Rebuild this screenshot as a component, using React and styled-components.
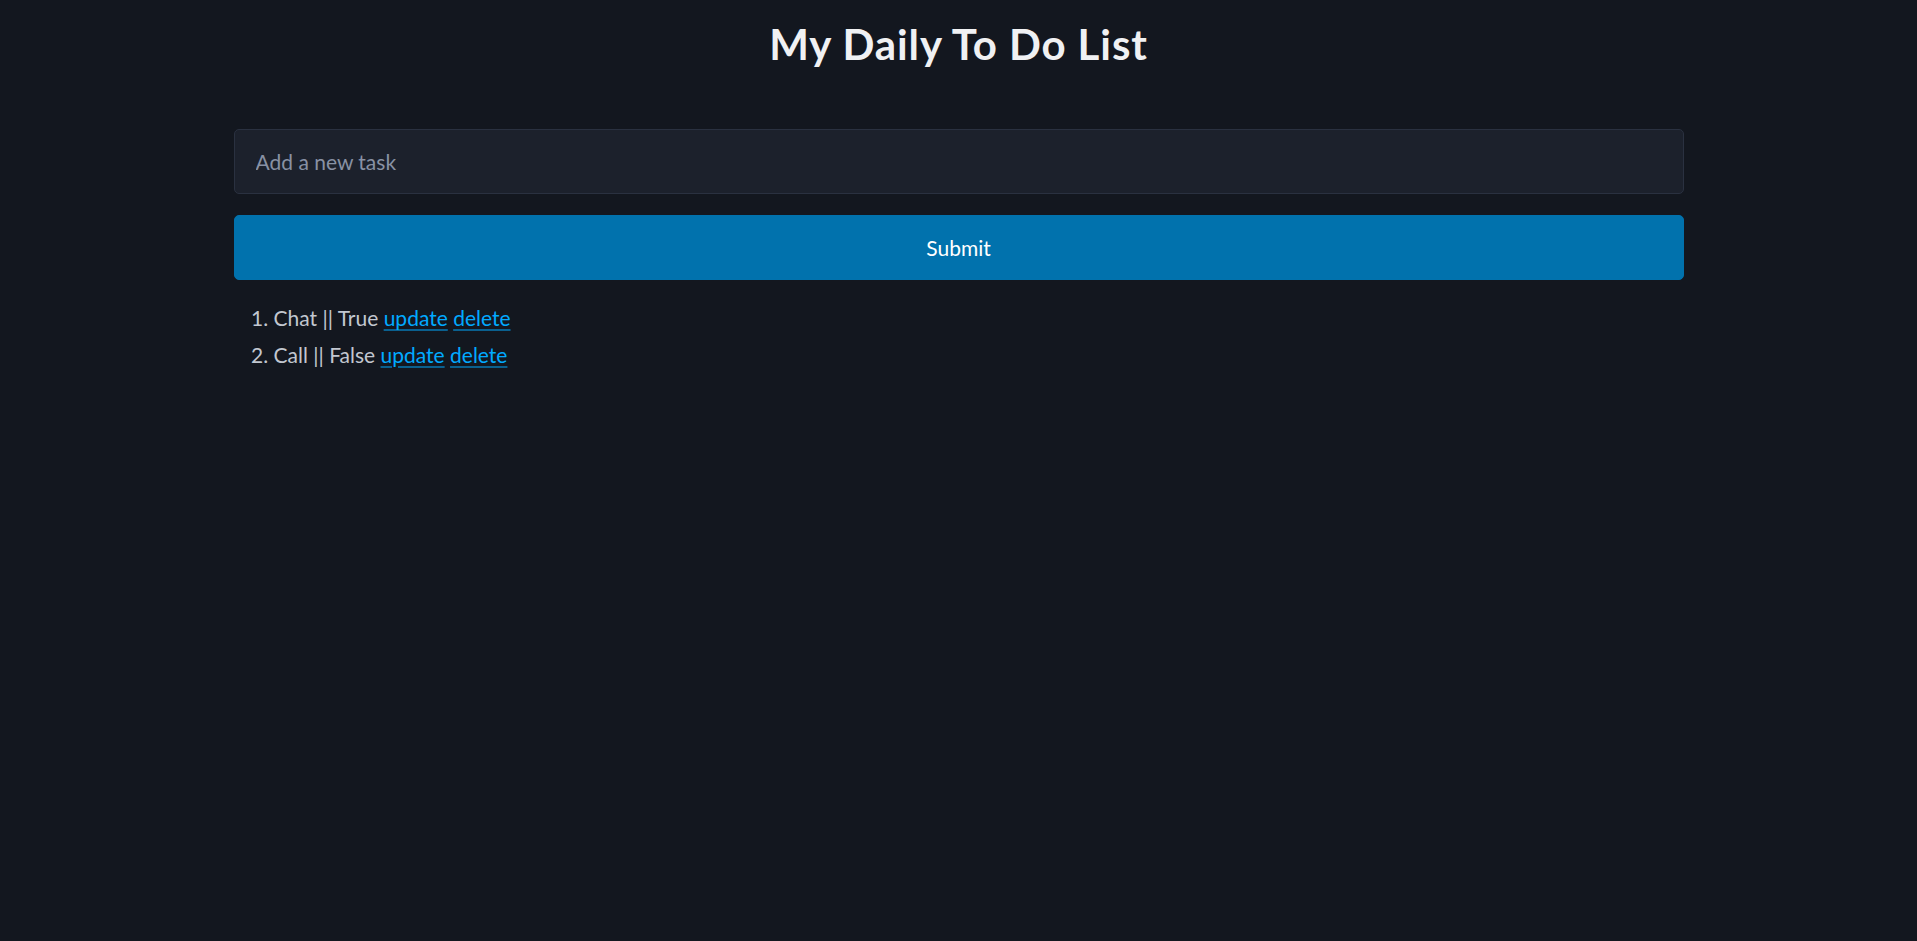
import React, { useState } from "react";
import styled, { createGlobalStyle } from "styled-components";

const GlobalStyle = createGlobalStyle`
  html, body {
    margin: 0;
    padding: 0;
    background: #13171f;
  }
  body {
    font-family: Lato, "Noto Sans", sans-serif;
    font-size: 21px;
    line-height: 1.5;
    color: #c2c7d0;
  }
  * { box-sizing: border-box; }
`;

const Main = styled.main`
  max-width: 1450px;
  margin: 0 auto;
  padding: 21px 0 21px;
`;

const Title = styled.h1`
  margin: 0 0 61px;
  text-align: center;
  font-size: 42px;
  line-height: 1.125;
  font-weight: 700;
  letter-spacing: 0.9px;
  color: #f0f1f3;
`;

const Form = styled.form`
  display: flex;
  flex-direction: column;
  gap: 21px;
  margin: 0 0 22px;
`;

const Input = styled.input`
  width: 100%;
  height: 65px;
  padding: 0 21px;
  font: inherit;
  color: #c2c7d0;
  background: #1c212c;
  border: 1px solid #2a3140;
  border-radius: 5px;
  outline: none;
  &::placeholder { color: #8891a4; }
`;

const Button = styled.button`
  width: 100%;
  height: 65px;
  font: inherit;
  color: #ffffff;
  background: #0172ad;
  border: 1px solid #0172ad;
  border-radius: 5px;
  cursor: pointer;
`;

const List = styled.ol`
  margin: 0;
  padding-left: 40px;
`;

const Item = styled.li`
  margin-bottom: 5px;
`;

const Link = styled.a`
  color: #01aaff;
  text-decoration: underline;
  text-decoration-color: rgba(1, 170, 255, 0.5);
  text-underline-offset: 3px;
  cursor: pointer;
`;

export default function App() {
  const [tasks] = useState([
    { name: "Chat", done: "True" },
    { name: "Call", done: "False" },
  ]);
  return (
    <>
      <GlobalStyle />
      <Main>
        <Title>My Daily To Do List</Title>
        <Form onSubmit={(e) => e.preventDefault()}>
          <Input placeholder="Add a new task" />
          <Button type="submit">Submit</Button>
        </Form>
        <List>
          {tasks.map((t) => (
            <Item key={t.name}>
              {t.name} || {t.done} <Link href="#">update</Link>{" "}
              <Link href="#">delete</Link>
            </Item>
          ))}
        </List>
      </Main>
    </>
  );
}
